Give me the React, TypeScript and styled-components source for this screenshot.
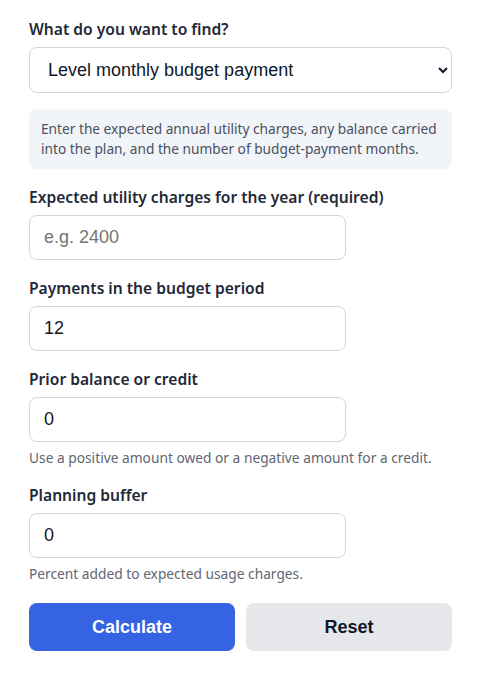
import React, { useState } from 'react'
import styled, { createGlobalStyle } from 'styled-components'

const GlobalStyle = createGlobalStyle`
  * { box-sizing: border-box; }
  body {
    margin: 0;
    background: #ffffff;
    font-family: "Noto Sans", "Open Sans", sans-serif;
    color: #1f2937;
  }
`

const App = () => {
  const [target, setTarget] = useState('level')
  const [charges, setCharges] = useState('')
  const [months, setMonths] = useState('12')
  const [balance, setBalance] = useState('0')
  const [buffer, setBuffer] = useState('0')

  const reset = () => {
    setTarget('level')
    setCharges('')
    setMonths('12')
    setBalance('0')
    setBuffer('0')
  }

  return (
    <>
      <GlobalStyle />
      <Form onSubmit={(e) => e.preventDefault()}>
        <Field>
          <Label htmlFor="target">What do you want to find?</Label>
          <Select id="target" value={target} onChange={(e) => setTarget(e.target.value)}>
            <option value="level">Level monthly budget payment</option>
            <option value="annual">Expected annual charges</option>
          </Select>
        </Field>

        <InfoBox>
          Enter the expected annual utility charges, any balance carried into the plan, and the number of
          budget-payment months.
        </InfoBox>

        <Field>
          <Label htmlFor="charges">Expected utility charges for the year (required)</Label>
          <Input id="charges" placeholder="e.g. 2400" value={charges} onChange={(e) => setCharges(e.target.value)} />
        </Field>

        <Field>
          <Label htmlFor="months">Payments in the budget period</Label>
          <Input id="months" value={months} onChange={(e) => setMonths(e.target.value)} />
        </Field>

        <Field>
          <Label htmlFor="balance">Prior balance or credit</Label>
          <Input id="balance" value={balance} onChange={(e) => setBalance(e.target.value)} />
          <Hint>Use a positive amount owed or a negative amount for a credit.</Hint>
        </Field>

        <Field>
          <Label htmlFor="buffer">Planning buffer</Label>
          <Input id="buffer" value={buffer} onChange={(e) => setBuffer(e.target.value)} />
          <Hint>Percent added to expected usage charges.</Hint>
        </Field>

        <Actions>
          <Button type="submit" $primary>Calculate</Button>
          <Button type="button" onClick={reset}>Reset</Button>
        </Actions>
      </Form>
    </>
  )
}

export default App

const Form = styled.form`
  width: 452px;
  padding: 17px 0 0 29px;
  display: flex;
  flex-direction: column;
  gap: 16px;
`

const Field = styled.div`
  display: flex;
  flex-direction: column;
`

const Label = styled.label`
  font-size: 15.6px;
  font-weight: 600;
  line-height: 24px;
  color: #1f2937;
  margin-bottom: 6px;
`

const Select = styled.select`
  width: 423px;
  height: 46px;
  padding: 0 12px 0 14px;
  font-family: "Liberation Sans", Arial, sans-serif;
  font-size: 18px;
  color: #111827;
  background: #ffffff;
  border: 1px solid #cfd4dc;
  border-radius: 8px;
  :focus {
    outline: none;
  }
`

const InfoBox = styled.div`
  width: 423px;
  padding: 10px 12px;
  background: #f1f4f8;
  border-radius: 8px;
  font-size: 13.7px;
  line-height: 20px;
  color: #4a5161;
`

const Input = styled.input`
  width: 317px;
  height: 45px;
  padding: 0 14px;
  font-family: "Liberation Sans", Arial, sans-serif;
  font-size: 18px;
  color: #111827;
  border: 1px solid #cfd4dc;
  border-radius: 8px;
  ::placeholder {
    color: #757575;
  }
  :focus {
    outline: none;
  }
`

const Hint = styled.div`
  margin-top: 7px;
  font-size: 13.75px;
  line-height: 18px;
  color: #5f6672;
`

const Actions = styled.div`
  display: grid;
  grid-template-columns: 1fr 1fr;
  gap: 11px;
  width: 423px;
  margin-top: 4px;
`

const Button = styled.button<{ $primary?: boolean }>`
  height: 48px;
  border: none;
  border-radius: 8px;
  font-family: "Liberation Sans", Arial, sans-serif;
  font-size: 18px;
  font-weight: 700;
  color: ${(p) => (p.$primary ? '#ffffff' : '#111827')};
  background: ${(p) => (p.$primary ? '#3563e3' : '#e5e7eb')};
  cursor: pointer;
`
